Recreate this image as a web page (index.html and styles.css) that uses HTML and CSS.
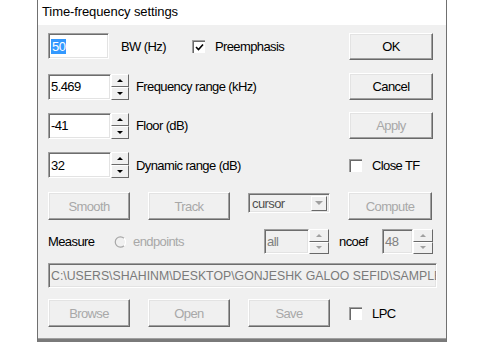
FILE: index.html
```html
<!DOCTYPE html>
<html lang="en">
<head>
    <meta charset="UTF-8">
    <meta name="viewport" content="width=device-width, initial-scale=1.0">
    <title>Time-frequency settings</title>
    <link rel="stylesheet" href="styles.css">
</head>
<body>

<div class="window">
    <div class="titlebar">Time-frequency settings</div>

    <div class="content">
        <!-- bandwidth -->
        <div class="row r1">
            <div class="edit bw"><span class="selected">50</span></div>
            <span class="label bw-label">BW (Hz)</span>
            <span class="check checked">
                <svg width="9" height="9" viewBox="0 0 9 9"><path d="M1 4 L3.5 6.5 L8 1.5" fill="none" stroke="#000" stroke-width="1.6"/></svg>
            </span>
            <span class="label">Preemphasis</span>
            <div class="btn side">OK</div>
        </div>

        <!-- frequency range -->
        <div class="row r2">
            <div class="edit num">5.469</div>
            <div class="spin"><span class="up"></span><span class="down"></span></div>
            <span class="label">Frequency range (kHz)</span>
            <div class="btn side">Cancel</div>
        </div>

        <!-- floor -->
        <div class="row r3">
            <div class="edit num">-41</div>
            <div class="spin"><span class="up"></span><span class="down"></span></div>
            <span class="label">Floor (dB)</span>
            <div class="btn side disabled">Apply</div>
        </div>

        <!-- dynamic range -->
        <div class="row r4">
            <div class="edit num">32</div>
            <div class="spin"><span class="up"></span><span class="down"></span></div>
            <span class="label">Dynamic range (dB)</span>
            <div class="side option">
                <span class="check"></span>
                <span class="label">Close TF</span>
            </div>
        </div>

        <!-- actions -->
        <div class="row r5">
            <div class="btn col disabled">Smooth</div>
            <div class="btn col disabled">Track</div>
            <div class="combo">
                <span class="combo-text">cursor</span>
                <span class="combo-drop"></span>
            </div>
            <div class="btn side disabled">Compute</div>
        </div>

        <!-- measure -->
        <div class="row r6">
            <span class="label measure">Measure</span>
            <span class="radio">
                <svg width="12" height="12" viewBox="0 0 12 12">
                    <path d="M10 2.2 A5.2 5.2 0 1 0 10 9.8" fill="none" stroke="#a8a8a8" stroke-width="1.2"/>
                    <path d="M10 9.8 A5.2 5.2 0 0 0 10 2.2" fill="none" stroke="#ffffff" stroke-width="1.2"/>
                </svg>
            </span>
            <span class="label muted endpoints">endpoints</span>
            <div class="edit small off all">all</div>
            <div class="spin off"><span class="up"></span><span class="down"></span></div>
            <span class="label ncoef">ncoef</span>
            <div class="edit tiny off">48</div>
            <div class="spin off"><span class="up"></span><span class="down"></span></div>
        </div>

        <!-- file path -->
        <div class="row r7">
            <div class="edit path off">C:\USERS\SHAHINM\DESKTOP\GONJESHK GALOO SEFID\SAMPLE</div>
        </div>

        <!-- file buttons -->
        <div class="row r8">
            <div class="btn col disabled">Browse</div>
            <div class="btn col disabled">Open</div>
            <div class="btn col disabled">Save</div>
            <div class="side option">
                <span class="check"></span>
                <span class="label">LPC</span>
            </div>
        </div>
    </div>
</div>

</body>
</html>
```

FILE: styles.css
```css
* {
    box-sizing: border-box;
    margin: 0;
    padding: 0;
}

body {
    background: #fff;
    font-family: "Liberation Sans", Arial, sans-serif;
    font-size: 13px;
    letter-spacing: -0.6px;
    color: #000;
}

.window {
    margin-left: 37px;
    width: 410px;
    height: 342px;
    border-left: 1px solid #707070;
    border-right: 1px solid #707070;
    border-bottom: 3px solid #7a7a7a;
    display: flex;
    flex-direction: column;
}

.titlebar {
    height: 25px;
    padding: 3px 0 0 4px;
    font-size: 13px;
    line-height: 18px;
    letter-spacing: -0.1px;
    background: #fff;
}

.content {
    flex: 1;
    background: #f0f0f0;
    padding: 8px 13px 0 10px;
    border-bottom: 1px solid #a0a0a0;
}

/* rows */
.row {
    display: flex;
    align-items: center;
}

.r1 { height: 27px; }
.r2 { height: 27px; margin-top: 13px; }
.r3 { height: 27px; margin-top: 12px; }
.r4 { height: 26px; margin-top: 13px; }
.r5 { height: 28px; margin-top: 14px; }
.r6 { height: 25px; margin-top: 9px; }
.r7 { height: 25px; margin-top: 9px; }
.r8 { height: 28px; margin-top: 11px; }

.label {
    white-space: nowrap;
}

.muted {
    color: #a8a8a8;
}

/* edit boxes */
.edit {
    height: 26px;
    background: #fff;
    border-top: 1px solid #a0a0a0;
    border-left: 1px solid #a0a0a0;
    border-right: 1px solid #fff;
    border-bottom: 1px solid #fff;
    box-shadow: inset 1px 1px 0 #6d6d6d, inset -1px -1px 0 #e3e3e3;
    padding: 0 2px;
    display: flex;
    align-items: center;
    white-space: nowrap;
    overflow: hidden;
}

.edit.bw {
    width: 61px;
    align-self: flex-start;
}

.edit.num {
    width: 63px;
    height: 26px;
}

.edit.off {
    background: #f0f0f0;
    color: #808080;
}

.selected {
    background: #3399ff;
    color: #fff;
    padding: 0 1px;
    line-height: 15px;
}

.bw-label {
    margin-left: 12px;
}

/* spinners */
.spin {
    width: 18px;
    height: 26px;
    display: flex;
    flex-direction: column;
    margin-right: 7px;
}

.spin span {
    flex: 1;
    background: #f0f0f0;
    border-top: 1px solid #fff;
    border-left: 1px solid #fff;
    border-right: 1px solid #696969;
    border-bottom: 1px solid #696969;
    display: flex;
    align-items: center;
    justify-content: center;
}

.spin .up::after {
    content: "";
    border-left: 3px solid transparent;
    border-right: 3px solid transparent;
    border-bottom: 3px solid #000;
}

.spin .down::after {
    content: "";
    border-left: 3px solid transparent;
    border-right: 3px solid transparent;
    border-top: 3px solid #000;
}

.spin.off .up::after {
    border-bottom-color: #a0a0a0;
}

.spin.off .down::after {
    border-top-color: #a0a0a0;
}

/* checkbox */
.check {
    width: 13px;
    height: 13px;
    background: #fff;
    border-top: 1px solid #a0a0a0;
    border-left: 1px solid #a0a0a0;
    box-shadow: inset 1px 1px 0 #696969;
    display: flex;
    align-items: center;
    justify-content: center;
    margin-right: 10px;
    flex-shrink: 0;
}

.check.checked {
    margin-left: 26px;
}

.check svg {
    margin: 1px 0 0 1px;
}

/* buttons */
.btn {
    width: 82px;
    height: 27px;
    background: #f0f0f0;
    border-top: 1px solid #fff;
    border-left: 1px solid #fff;
    border-right: 1px solid #696969;
    border-bottom: 1px solid #696969;
    box-shadow: inset -1px -1px 0 #a0a0a0, inset 1px 1px 0 #e3e3e3;
    display: flex;
    align-items: center;
    justify-content: center;
    flex-shrink: 0;
}

.btn.disabled {
    color: #a8a8a8;
}

.col {
    margin-right: 18px;
}

.r5 .btn, .r8 .btn {
    height: 28px;
}

.side {
    width: 84px;
    margin-left: auto;
}

.r5 .side {
    margin-left: 0;
}

.side.option {
    display: flex;
    align-items: center;
    height: 26px;
}

.r8 .side.option {
    margin-left: 0;
    padding-left: 1px;
}

/* combo */
.combo {
    width: 82px;
    height: 20px;
    align-self: flex-start;
    margin-top: 1px;
    margin-right: 18px;
    background: #f0f0f0;
    border-top: 1px solid #a0a0a0;
    border-left: 1px solid #a0a0a0;
    border-right: 1px solid #fff;
    border-bottom: 1px solid #fff;
    box-shadow: inset 1px 1px 0 #6d6d6d, inset -1px -1px 0 #e3e3e3;
    display: flex;
    align-items: center;
    padding: 0 2px 0 3px;
}

.combo-text {
    flex: 1;
    color: #505050;
}

.combo-drop {
    width: 16px;
    height: 15px;
    background: #f0f0f0;
    border-top: 1px solid #fff;
    border-left: 1px solid #fff;
    border-right: 1px solid #696969;
    border-bottom: 1px solid #696969;
    display: flex;
    align-items: center;
    justify-content: center;
}

.combo-drop::after {
    content: "";
    border-left: 4px solid transparent;
    border-right: 4px solid transparent;
    border-top: 4px solid #a0a0a0;
}

/* measure row */
.measure {
    width: 66px;
}

.radio {
    width: 12px;
    height: 12px;
    margin-right: 7px;
    display: flex;
}

.endpoints {
    width: 131px;
}

.edit.small {
    width: 45px;
    height: 25px;
}

.r6 .spin {
    height: 25px;
    width: 20px;
    margin-right: 10px;
}

.ncoef {
    width: 43px;
}

.edit.tiny {
    width: 31px;
    height: 25px;
}

.r6 .spin:last-child {
    margin-right: 0;
}

/* path */
.edit.path {
    width: 389px;
    height: 25px;
    margin-right: -4px;
    color: #7a7a7a;
    font-size: 12.3px;
    letter-spacing: 0;
}
```
